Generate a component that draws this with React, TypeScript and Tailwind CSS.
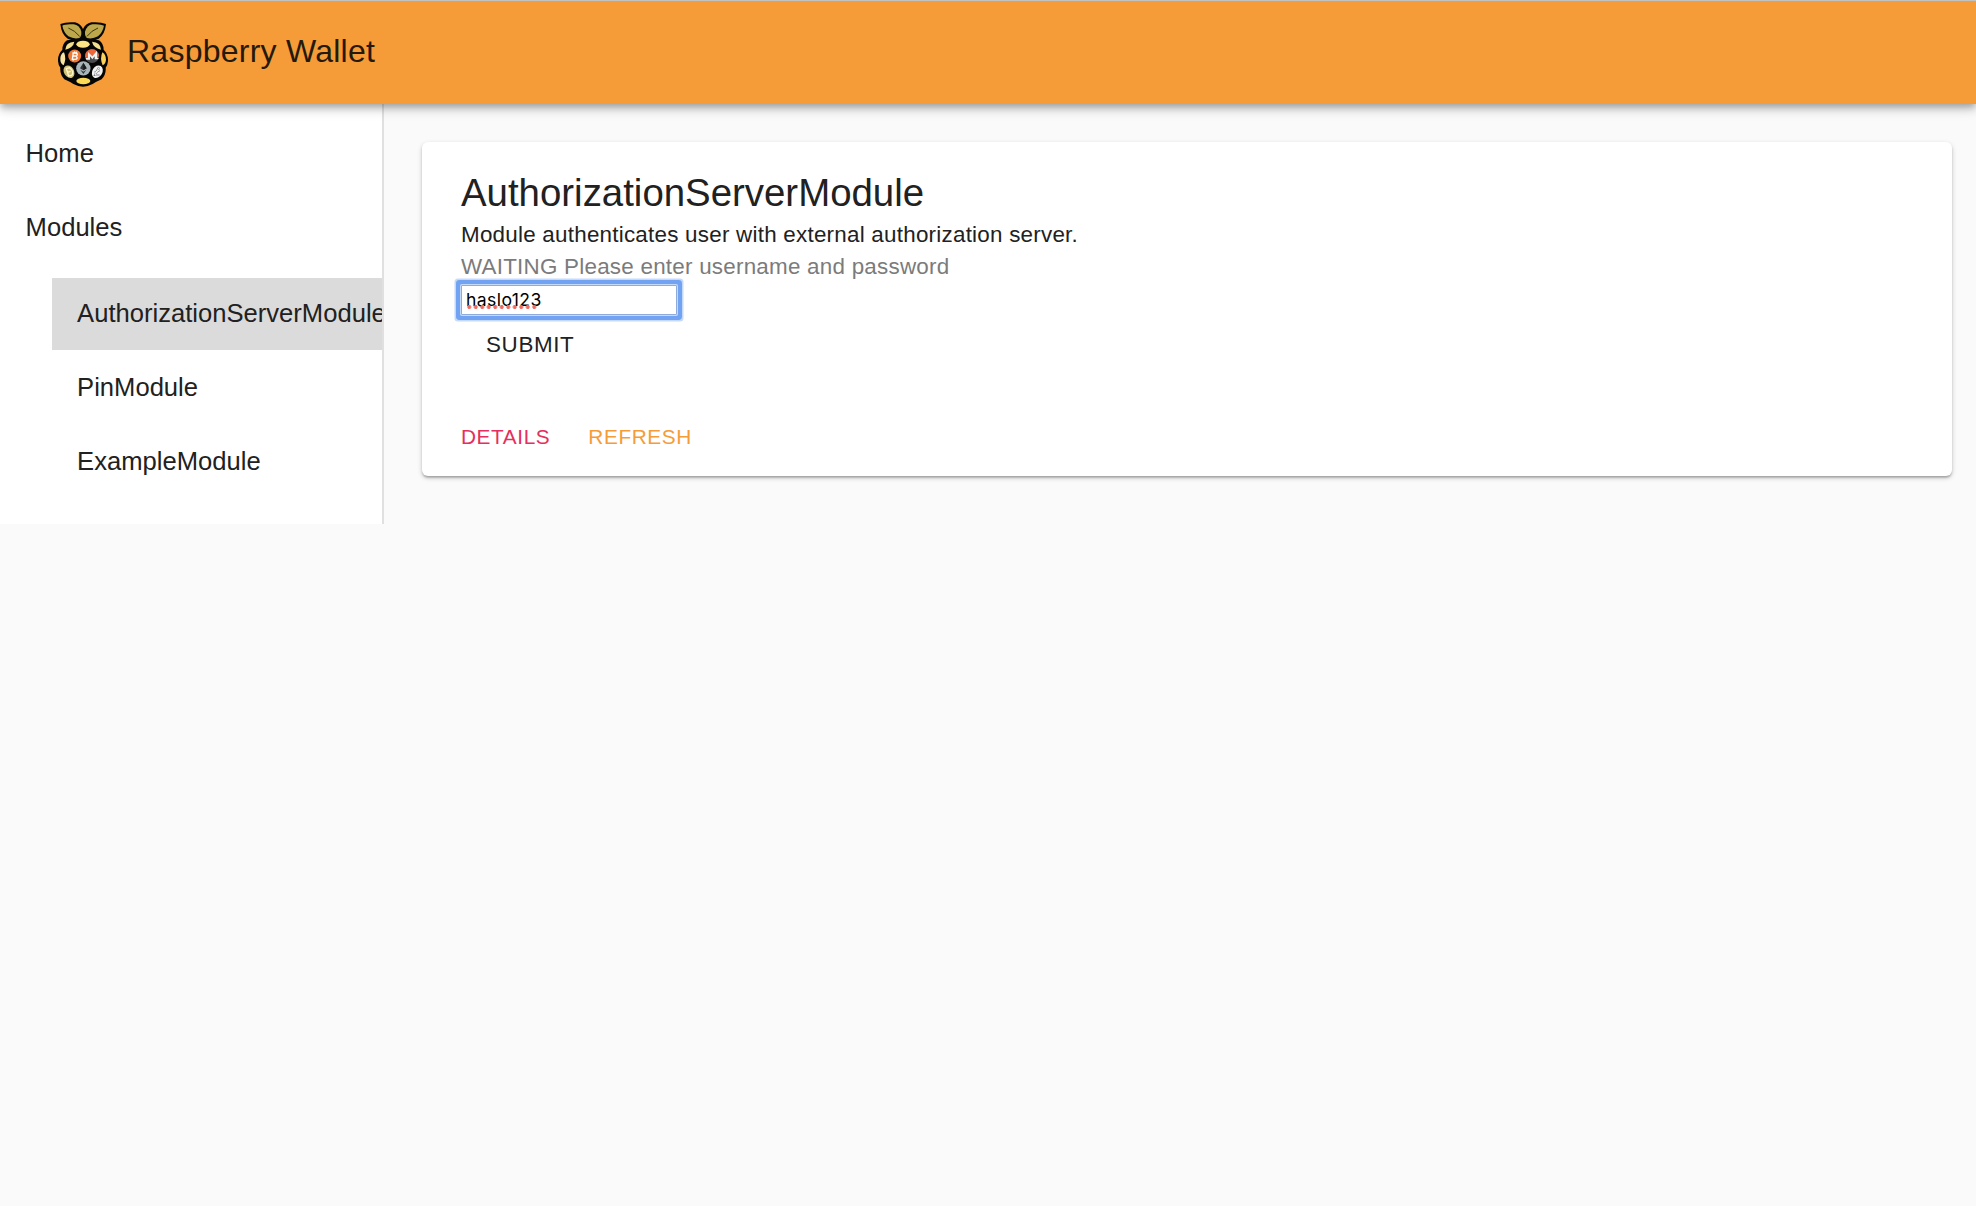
import React from "react";

function Logo() {
  return (
    <svg viewBox="53 35 150 195" className="h-[65px] w-[50px] shrink-0" aria-hidden="true">
      <path d="M128 86 Q152 86 176 90 Q190 100 190 118 Q204 132 203 152 Q202 165 196 172 Q198 192 184 207 Q168 214 157 221 Q142 229 128 229 Q114 229 99 221 Q88 214 72 207 Q58 192 60 172 Q54 165 53 152 Q52 132 66 118 Q66 100 80 90 Q104 86 128 86Z" fill="#050505" />
      <path d="M128 100 Q100 92 82 85 Q63 72 60 41 Q76 34 104 36 Q122 41 128 56 Q134 41 153 36 Q181 34 197 41 Q194 72 175 85 Q157 92 128 100Z" fill="#080802" />
      <path d="M66 46 Q75 40 100 42 Q118 45 123 64 Q124 77 117 83 Q101 87 84 78 Q70 66 66 46Z" fill="#bda94c" />
      <path d="M191 46 Q181 40 156 42 Q140 45 134 64 Q133 77 140 83 Q157 87 173 78 Q187 66 191 46Z" fill="#bda94c" />
      <path d="M84 53 Q103 60 118 78 M173 53 Q154 60 140 78" fill="none" stroke="#3b3614" strokeWidth="3" />
      <ellipse cx="128" cy="102" rx="20" ry="10.500" fill="#fde487" />
      <path d="M75 118 Q76 95 102 94 Q99 112 75 118Z" fill="#f4df8d" />
      <path d="M182 118 Q181 95 155 94 Q159 112 182 118Z" fill="#f4df8d" />
      <path d="M71 126 Q79 144 70 165 Q59 160 60 144 Q61 130 71 126Z" fill="#f8e3a1" />
      <path d="M186 126 Q197 132 197 149 Q195 162 187 165 Q178 145 186 126Z" fill="#fbd35b" />
      <ellipse cx="129" cy="212" rx="21" ry="9.500" fill="#f9d957" />
      <circle cx="103" cy="137" r="19.500" fill="#ed7934" />
      <path d="M99 127 L96 147 M96 128 H106 Q115 131 108 137 H99 M106 137 Q115 144 106 147 H94 M103 123 L102 128 M109 124 L108 129 M99 147 L98 151" fill="none" stroke="#fff" strokeWidth="4" />
      <circle cx="155" cy="137" r="21" fill="#4b4b4d" />
      <path d="M134 141 A21 21 0 1 1 176 135 L173 143 H168 V127 L155 140 L143 127 V144Z" fill="#ed673b" />
      <path d="M136 143 H143 V125 L156 138 L170 121 V143 H176 L172 147 H163 V138 L156 147 L149 138 V148 H138Z" fill="#f5f3f0" />
      <circle cx="129" cy="174" r="21.500" fill="#a9b5b8" />
      <path d="M129 157 L119 174 L129 180 L139 174Z M120 178 L129 184 L138 178 L129 191Z" fill="#303638" />
      <path d="M129 157 L129 180 L139 174Z" fill="#171b1c" />
      <ellipse cx="86" cy="184" rx="15" ry="20" transform="rotate(-31 86 184)" fill="#d2c276" />
      <path d="M78 175 L88 172 Q103 184 94 195 L85 197 Z M81 186 L91 183" fill="none" stroke="#fff6cf" strokeWidth="4" />
      <ellipse cx="171" cy="184" rx="15" ry="20" transform="rotate(31 171 184)" fill="#f1f1f1" />
      <path d="M176 171 L164 194 H177 M163 187 L178 179" fill="none" stroke="#77777a" strokeWidth="6" />
      <path d="M176 171 L164 194 H177 M163 187 L178 179" fill="none" stroke="#fff" strokeWidth="3" />
    </svg>
  );
}

function NavItem({ label, selected = false }: { label: string; selected?: boolean }) {
  return (
    <a className={`flex items-center pl-[25.6px] text-[25.6px] leading-[38.4px] whitespace-nowrap text-[#212121] ${selected ? "mt-[1.2px] h-[72.4px] bg-[#dbdbdb] pb-px" : "h-[73.6px]"}`}>
      {label}
    </a>
  );
}

export default function App() {
  return (
    <div className="flex min-h-[1206px] flex-col overflow-hidden bg-[#fafafa] font-['Liberation_Sans',Arial,sans-serif] text-[#212121]">
      <header className="relative z-10 flex h-[104px] items-center border-t border-[#c2c2c0] bg-[#f59c38] pl-[58px] shadow-[0_3px_6px_-1px_rgba(0,0,0,0.2),0_6px_8px_0_rgba(0,0,0,0.14),0_2px_16px_0_rgba(0,0,0,0.12)]">
        <div className="pt-1"><Logo /></div>
        <h1 className="ml-[19px] pb-[2px] text-[32px] leading-[51px] tracking-[0.24px] text-[#25190c]">Raspberry Wallet</h1>
      </header>
      <div className="flex items-start">
        <nav className="w-[384px] shrink-0 overflow-hidden border-r-2 border-[#e0e0e0] bg-white pt-[12.8px] pb-[13.6px]">
          <NavItem label="Home" />
          <NavItem label="Modules" />
          <div className="py-[12.8px] pl-[51.5px]">
            <NavItem label="AuthorizationServerModule" selected />
            <NavItem label="PinModule" />
            <NavItem label="ExampleModule" />
          </div>
        </nav>
        <main className="min-w-0 flex-1 pt-[38px] pr-6 pl-[38px]">
          <section className="h-[334px] rounded-[6px] bg-white px-[39px] pt-[25px] shadow-[0_2px_5px_0_rgba(0,0,0,0.2),0_2px_2px_0_rgba(0,0,0,0.14),0_3px_2px_-2px_rgba(0,0,0,0.12)]">
            <h2 className="mb-px text-[38.4px] leading-[51px]">AuthorizationServerModule</h2>
            <p className="text-[22.4px] leading-8 tracking-[0.24px]">Module authenticates user with external authorization server.</p>
            <p className="text-[22.4px] leading-8 tracking-[0.24px] text-[#7b7b7b]">WAITING Please enter username and password</p>
            <div className="mt-[2px] flex h-[30px] w-[216px] items-center rounded-[1px] border border-[#8fabdc] bg-white px-1 shadow-[0_0_0_1px_#c5d9fa,0_0_0_5px_#72a2f2,0_0_0_6.5px_#c5d9fa]">
              <span className="relative font-[Inter,sans-serif] text-[17.6px] leading-5 tracking-[0.4px] text-black">
                haslo123
                <span className="absolute top-[15px] left-0 h-[4px] w-[71.5px] bg-[radial-gradient(circle,#ee6b60_1.7px,transparent_2.2px)] bg-[length:6.5px_4px] bg-repeat-x" />
              </span>
            </div>
            <button className="mt-[14px] ml-[25px] block text-[22.4px] leading-8 tracking-[0.64px]">SUBMIT</button>
            <div className="mt-[60px] flex gap-[38px] text-[20.8px] leading-8 tracking-[0.6px]">
              <button className="text-[#e4305e]">DETAILS</button>
              <button className="text-[#f59c38]">REFRESH</button>
            </div>
          </section>
        </main>
      </div>
    </div>
  );
}
